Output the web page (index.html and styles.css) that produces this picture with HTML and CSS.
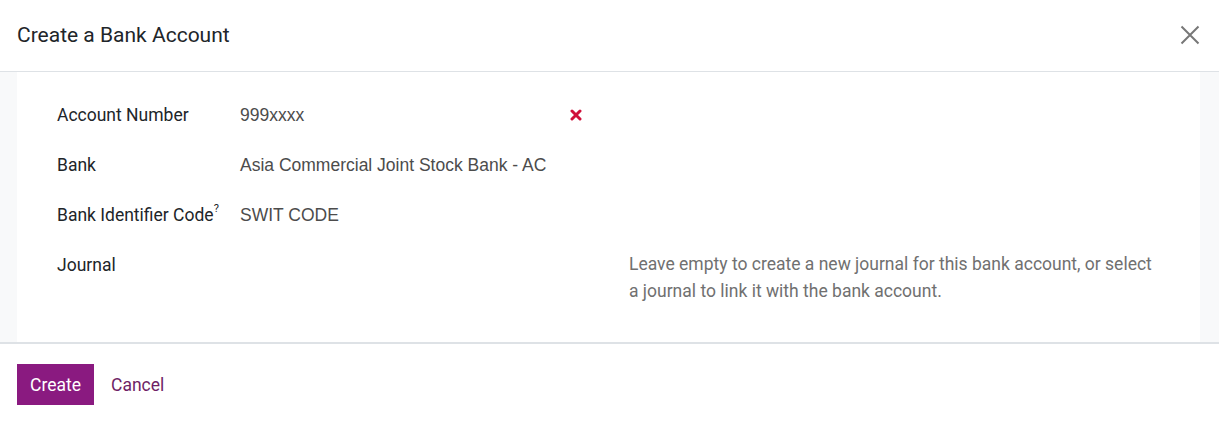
FILE: index.html
```html
<!DOCTYPE html>
<html>
<head>
<meta charset="utf-8">
<link rel="stylesheet" href="styles.css">
</head>
<body>
<div class="modal">
  <header class="modal-header">
    <h4 class="modal-title">Create a Bank Account</h4>
    <button class="close-btn" aria-label="Close">
      <svg width="20" height="20" viewBox="0 0 20 20"><path d="M1.5 1.5 L18.5 18.5 M18.5 1.5 L1.5 18.5" stroke="#777" stroke-width="2" fill="none"/></svg>
    </button>
  </header>
  <main class="modal-body">
    <div class="sheet">
      <div class="row">
        <div class="label">Account Number</div>
        <div class="value field-clear">
          <span>999xxxx</span>
          <svg class="clear" width="12" height="12" viewBox="0 0 12 12"><path d="M2 2 L10 10 M10 2 L2 10" stroke="#d0103a" stroke-width="3" stroke-linecap="round" fill="none"/></svg>
        </div>
        <div></div>
      </div>
      <div class="row">
        <div class="label">Bank</div>
        <div class="value">Asia Commercial Joint Stock Bank - AC</div>
        <div></div>
      </div>
      <div class="row">
        <div class="label">Bank Identifier Code<sup class="tip">?</sup></div>
        <div class="value">SWIT CODE</div>
        <div></div>
      </div>
      <div class="row">
        <div class="label">Journal</div>
        <div class="value"></div>
        <div class="help">Leave empty to create a new journal for this bank account, or select a journal to link it with the bank account.</div>
      </div>
    </div>
  </main>
  <footer class="modal-footer">
    <button class="btn-primary">Create</button>
    <button class="btn-link">Cancel</button>
  </footer>
</div>
</body>
</html>
```

FILE: styles.css
```css
* { box-sizing: border-box; }
html, body { margin: 0; padding: 0; background: #fff; }
body { font-family: Roboto, "Noto Sans", sans-serif; color: #212529; font-size: 17.5px; }

.modal-header {
  display: flex;
  align-items: center;
  justify-content: space-between;
  height: 72px;
  padding: 0 17px 2px 17px;
  border-bottom: 1px solid #dee2e6;
}
.modal-title {
  margin: 0;
  font-size: 21px;
  font-weight: 400;
  line-height: 24px;
  color: #212529;
}
.close-btn {
  background: none;
  border: 0;
  padding: 0;
  width: 20px;
  height: 20px;
  margin-right: 2px;
  display: flex;
}

.modal-body {
  background: #f8f9fa;
  padding: 0 19px 0 17px;
  border-bottom: 2px solid #dee2e6;
}
.sheet {
  background: #fff;
  padding: 18px 40px 24px 40px;
}
.row {
  display: grid;
  grid-template-columns: 183px 389px 1fr;
  padding: 13px 0;
  line-height: 24px;
}
.label { color: #212529; white-space: nowrap; }
.tip { font-size: 11px; vertical-align: top; position: relative; top: 0; margin-left: 0; line-height: 1; }
.value {
  font-family: "Liberation Sans", Arial, sans-serif;
  color: #4c4c4c;
  font-size: 17.5px;
}
.field-clear {
  display: flex;
  align-items: center;
  justify-content: space-between;
  padding-right: 47px;
}
.clear { display: block; }
.help {
  color: #707070;
  line-height: 27px;
  margin-top: -2px;
  max-width: 530px;
}

.modal-footer {
  display: flex;
  align-items: center;
  padding: 20px 17px 20px;
}
.btn-primary {
  background: #8a1a80;
  color: #fff;
  border: 0;
  font-family: Roboto, sans-serif;
  font-size: 17.5px;
  height: 41px;
  width: 77px;
  padding: 0;
  border-radius: 0;
}
.btn-link {
  background: none;
  border: 0;
  color: #6f1f66;
  font-family: Roboto, sans-serif;
  font-size: 17.5px;
  padding: 0 0 0 17px;
  height: 41px;
}
```
